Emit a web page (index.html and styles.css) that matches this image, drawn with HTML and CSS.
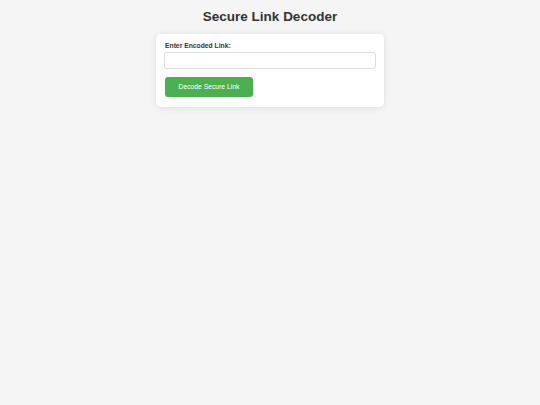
FILE: index.html
```html
<!doctype html>
<html>

<head>
  <title>Secure Link Decoder</title>
  <link rel="stylesheet" href="styles.css">
</head>

<body>
  <h1 class="title">Secure Link Decoder</h1>
  <main class="panel">
    <label class="field-label" for="encoded">Enter Encoded Link:</label>
    <input class="field-input" id="encoded" type="text" />
    <button class="decode-btn" type="button">Decode Secure Link</button>
  </main>
</body>

</html>
```

FILE: styles.css
```css
* {
  box-sizing: border-box;
  margin: 0;
  padding: 0;
}

html,
body {
  width: 100%;
  height: 100%;
}

body {
  font-family: "Liberation Sans", Arial, sans-serif;
  background: #f5f5f5;
  color: #333;
  display: flex;
  flex-direction: column;
  align-items: center;
  padding-top: 9px;
}

.title {
  font-size: 13.5px;
  font-weight: bold;
  line-height: 15px;
  color: #333;
  margin-bottom: 10px;
}

/** Card */
.panel {
  width: 228px;
  background: #fff;
  border-radius: 5px;
  box-shadow: 0 1px 6px rgba(0, 0, 0, 0.1);
  padding: 8px 8px 10.5px;
  display: flex;
  flex-direction: column;
  align-items: flex-start;
}

.field-label {
  font-size: 6.75px;
  font-weight: bold;
  line-height: 8px;
  color: #333;
  margin-left: 1px;
}

.field-input {
  width: 100%;
  height: 17px;
  margin-top: 2px;
  border: 1px solid #ddd;
  border-radius: 3px;
  background: #fff;
  outline: none;
}

.decode-btn {
  margin-top: 7.5px;
  margin-left: 1px;
  width: 88px;
  height: 20px;
  border: none;
  border-radius: 3px;
  background: #4caf50;
  color: #fff;
  font-family: inherit;
  font-size: 6.75px;
  cursor: pointer;
}
```
